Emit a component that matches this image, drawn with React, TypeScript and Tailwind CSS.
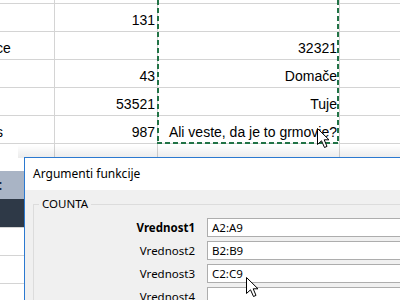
import React from "react";

const rows: { a?: string; aOff?: boolean; b?: string; c?: string }[] = [
  { b: "131" },
  { a: "ce", c: "32321" },
  { b: "43", c: "Domače" },
  { b: "53521", c: "Tuje" },
  { a: "s", b: "987", c: "Ali veste, da je to grmovje?" },
  {},
  {},
  {},
  {},
  {},
];

function Cursor() {
  return (
    <svg width="14" height="22" viewBox="0 0 14 22">
      <path
        d="M1.5 1.5 V17.5 L5.5 13.8 L8.5 20.5 L11 19.4 L8.2 12.8 H13 Z"
        fill="#ffffff"
        stroke="#000000"
        strokeWidth="1"
        strokeLinejoin="miter"
      />
    </svg>
  );
}

const args = ["A2:A9", "B2:B9", "C2:C9", ""];

export default function App() {
  return (
    <div className="relative w-[400px] h-[300px] overflow-hidden bg-white font-['Liberation_Sans',Arial,sans-serif] text-[14px] text-black">
      {/* Spreadsheet grid */}
      <div className="flex flex-col">
        <div className="flex h-[4px] border-b border-[#d4d4d4]">
          <div className="w-[55px] border-r border-[#d4d4d4]" />
          <div className="w-[103px] border-r border-[#d4d4d4]" />
          <div className="w-[182px] border-r border-[#d4d4d4]" />
        </div>
        {rows.map((r, i) => (
          <div key={i} className="flex h-[28px] border-b border-[#d4d4d4] leading-[28px]">
            <div className="w-[55px] border-r border-[#d4d4d4] overflow-hidden whitespace-nowrap pt-[2px]">
              {r.a && <span className="ml-[-4px]">{r.a}</span>}
            </div>
            <div className="w-[103px] border-r border-[#d4d4d4] text-right pr-[2px] whitespace-nowrap pt-[2px]">
              {r.b}
            </div>
            <div className="w-[182px] border-r border-[#d4d4d4] text-right pr-[2px] whitespace-nowrap pt-[2px]">
              {r.c}
            </div>
            <div className="flex-1" />
          </div>
        ))}
      </div>

      {/* Copy selection marquee */}
      <svg className="absolute left-[157px] top-0" width="183" height="145">
        <line x1="1" y1="0" x2="1" y2="144" stroke="#217346" strokeWidth="2" strokeDasharray="5 3" />
        <line x1="181" y1="0" x2="181" y2="144" stroke="#217346" strokeWidth="2" strokeDasharray="5 3" />
        <line x1="0" y1="143" x2="182" y2="143" stroke="#217346" strokeWidth="2" strokeDasharray="5 3" />
      </svg>

      {/* Cursor over sheet */}
      <div className="absolute left-[316px] top-[127px]">
        <Cursor />
      </div>

      {/* Left side panel fragment */}
      <div className="absolute left-0 top-[171px] w-[24px] flex flex-col">
        <div className="h-[28px] bg-[#a9b4c5] text-[#1d2a44] font-bold leading-[28px] pl-0">
          <span className="ml-[-2px]">:</span>
        </div>
        <div className="h-[28px] bg-[#2e3947]" />
      </div>

      {/* Dialog shadow */}
      <div className="absolute left-[18px] top-[145px] right-0 h-[13px] bg-gradient-to-b from-[#ffffff00] to-[#00000014]" />

      {/* Dialog */}
      <div className="absolute left-[24px] top-[157px] w-[420px] h-[160px] border-l border-t border-[#2b79d0] bg-[#f0f0f0] font-['Noto_Sans',sans-serif] text-[11.5px] text-black">
        <div className="h-[32px] bg-white pl-[8px] flex items-center">
          <span className="text-[12px]">Argumenti funkcije</span>
        </div>
        <fieldset className="ml-[8px] mt-[5px] border border-[#dcdcdc] pb-[10px]">
          <legend className="ml-[5px] px-[3px] leading-[18px]">COUNTA</legend>
          <div className="flex flex-col gap-[4px] pt-[5px]">
            {args.map((v, i) => (
              <div key={i} className="flex items-center h-[19px]">
                <div
                  className={
                    "w-[161px] text-right whitespace-nowrap " + (i === 0 ? "font-bold" : "")
                  }
                >
                  {"Vrednost" + (i + 1)}
                </div>
                <div className="ml-[12px] flex-1 h-[19px] bg-white border border-[#adadad] pl-[4px] leading-[17px]">
                  {v}
                </div>
              </div>
            ))}
          </div>
        </fieldset>
      </div>

      {/* Cursor over dialog */}
      <div className="absolute left-[245px] top-[276px]">
        <Cursor />
      </div>
    </div>
  );
}
